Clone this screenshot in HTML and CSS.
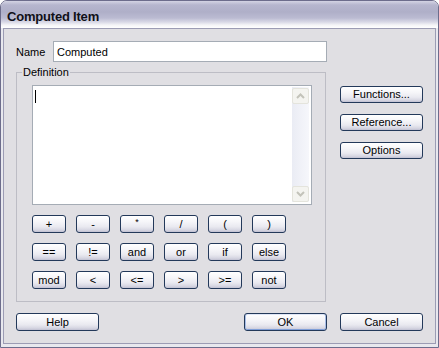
FILE: index.html
```html
<!DOCTYPE html>
<html lang="en">
<head>
  <meta charset="UTF-8">
  <title>Computed Item</title>
  <link rel="stylesheet" href="styles.css">
</head>
<body>
  <div class="window">
    <div class="titlebar">
      <span class="title">Computed Item</span>
    </div>
    <div class="client">
      <div class="name-row">
        <label for="name">Name</label>
        <input type="text" id="name" class="name-input" value="Computed">
      </div>
      <div class="main-row">
        <fieldset class="definition">
          <legend>Definition</legend>
          <div class="editor">
            <div class="editor-text"><span class="caret"></span></div>
            <div class="vscroll">
              <div class="sb-btn">
                <svg width="9" height="6" viewBox="0 0 9 6"><path d="M1 5 L4.5 1.5 L8 5" fill="none" stroke="#c3c3ba" stroke-width="2"/></svg>
              </div>
              <div class="sb-track"></div>
              <div class="sb-btn">
                <svg width="9" height="6" viewBox="0 0 9 6"><path d="M1 1 L4.5 4.5 L8 1" fill="none" stroke="#c3c3ba" stroke-width="2"/></svg>
              </div>
            </div>
          </div>
          <div class="ops">
            <button class="btn">+</button>
            <button class="btn">-</button>
            <button class="btn op-small">*</button>
            <button class="btn">/</button>
            <button class="btn">(</button>
            <button class="btn">)</button>
            <button class="btn">==</button>
            <button class="btn">!=</button>
            <button class="btn">and</button>
            <button class="btn">or</button>
            <button class="btn">if</button>
            <button class="btn">else</button>
            <button class="btn">mod</button>
            <button class="btn">&lt;</button>
            <button class="btn">&lt;=</button>
            <button class="btn">&gt;</button>
            <button class="btn">&gt;=</button>
            <button class="btn">not</button>
          </div>
        </fieldset>
        <div class="side-buttons">
          <button class="btn">Functions...</button>
          <button class="btn">Reference...</button>
          <button class="btn">Options</button>
        </div>
      </div>
      <div class="bottom-row">
        <button class="btn wide">Help</button>
        <button class="btn wide default">OK</button>
        <button class="btn wide cancel">Cancel</button>
      </div>
    </div>
  </div>
</body>
</html>
```

FILE: styles.css
```css
* {
  margin: 0;
  padding: 0;
  box-sizing: border-box;
}
body {
  background: #ffffff;
  font-family: 'Liberation Sans', Arial, sans-serif;
  font-size: 11px;
  color: #000;
}
.window {
  width: 439px;
  height: 348px;
  border: 1px solid #6d6d8c;
  border-radius: 7px 7px 0 0;
  background: #e8e8ee;
  display: flex;
  flex-direction: column;
}
.titlebar {
  height: 27px;
  flex: none;
  padding: 8px 0 0 6px;
  border-radius: 6px 6px 0 0;
  background: linear-gradient(to bottom, #d4d4e4 0px, #b6b6ce 4px, #afafc8 11px, #bbbbd2 17px, #d8d8e6 21px, #f4f4f7 24px, #ffffff 27px);
}
.title {
  font-weight: bold;
  font-size: 13px;
  color: #101018;
  letter-spacing: -0.2px;
}
.client {
  flex: 1;
  margin: 0 2px 3px;
  border: 1px solid #9c9cb4;
  background: #e0dfe3;
  padding: 12px 12px 0 12px;
}
.name-row {
  display: flex;
  align-items: center;
  height: 21px;
}
.name-row label {
  width: 37px;
}
.name-input {
  width: 274px;
  height: 21px;
  border: 1px solid #a5acb5;
  background: #fff;
  padding: 0 3px;
  font-family: inherit;
  font-size: 11px;
  color: #000;
  outline: none;
}
.main-row {
  display: flex;
  align-items: flex-start;
  margin-top: 4px;
}
.definition {
  width: 310px;
  border: 1px solid #bdbdc5;
  padding: 6px 13px 12px 15px;
  min-inline-size: 0;
}
.definition legend {
  margin-left: -10px;
  padding: 0 1px;
  line-height: 13px;
}
.editor {
  width: 280px;
  height: 120px;
  border: 1px solid #a5acb5;
  background: #fff;
  display: flex;
  padding: 1px 2px 2px 1px;
}
.editor-text {
  flex: 1;
  padding: 3px 0 0 1px;
}
.caret {
  display: block;
  width: 1px;
  height: 13px;
  background: #000;
}
.vscroll {
  width: 17px;
  display: flex;
  flex-direction: column;
  background: linear-gradient(to right, #eaecf4, #f6f7fb);
  padding-top: 1px;
}
.sb-btn {
  height: 16px;
  border: 1px solid #e4e4dc;
  border-radius: 2px;
  background: #f4f4f0;
  display: flex;
  align-items: center;
  justify-content: center;
}
.sb-track {
  flex: 1;
}
.ops {
  display: grid;
  grid-template-columns: repeat(6, 34px);
  grid-auto-rows: 18px;
  gap: 10px;
  margin-top: 10px;
}
.btn {
  height: 18px;
  border: 1px solid #23395a;
  border-radius: 3px;
  background: linear-gradient(to bottom, #ffffff 0%, #f6f6f9 35%, #e9e9f0 68%, #d6d6e2 88%, #c0c0d2 100%);
  font-family: inherit;
  font-size: 11px;
  color: #000;
  display: flex;
  align-items: center;
  justify-content: center;
  line-height: 1;
}
.op-small {
  font-size: 9px;
  align-items: flex-start;
  padding-top: 2px;
}
.side-buttons {
  display: flex;
  flex-direction: column;
  gap: 11px;
  margin-left: 14px;
  padding-top: 20px;
}
.side-buttons .btn {
  width: 83px;
  height: 17px;
}
.bottom-row {
  display: flex;
  margin-top: 11px;
}
.wide {
  width: 83px;
}
.default {
  margin-left: auto;
  box-shadow: inset 1px 0 #a8bde6, inset -1px 0 #a8bde6, inset 0 -1px #7f9ed8, inset 0 1px #dfe6f6;
}
.cancel {
  margin-left: 13px;
}
```
